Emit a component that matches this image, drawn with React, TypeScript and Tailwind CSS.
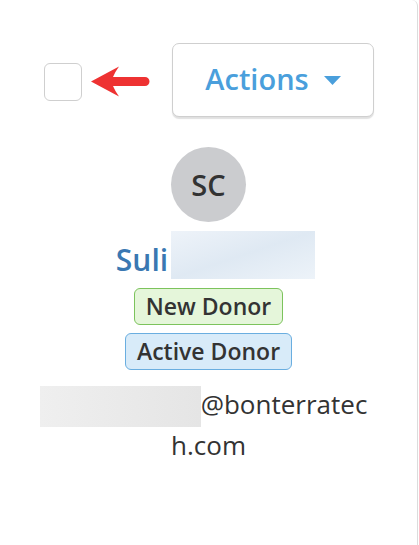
import React from 'react'

const font = { fontFamily: '"Open Sans", "Noto Sans", Arial, sans-serif' }

function PointerArrow() {
  return (
    <svg width="60" height="33" viewBox="0 0 60 33" className="block">
      <path
        d="M1 16.5 L29 1.5 Q25 7 23 12 L55 12 A4.5 4.5 0 0 1 55 21 L23 21 Q25 26 29 31.5 Z"
        fill="#ee3232"
      />
    </svg>
  )
}

export default function App() {
  return (
    <div className="w-[419px] h-[545px] bg-white overflow-hidden" style={font}>
      <div className="w-[418px] h-[545px] border-r border-[#dcdcdc] rounded-tr-md flex flex-col items-center">
        {/* top row */}
        <div className="w-full flex items-center pl-[44px] pt-[43px]">
          <div className="mt-[3px] w-[38px] h-[38px] rounded-[6px] border border-[#cfcfcf] bg-white" />
          <div className="ml-[8px] mt-[2px]">
            <PointerArrow />
          </div>
          <button className="ml-[22px] w-[202px] h-[74px] rounded-[7px] border border-[#cfcfcf] bg-white shadow-[0_2px_1px_rgba(0,0,0,0.12)] flex items-center justify-center gap-[15px] text-[#4a9fdc] text-[29px] font-semibold">
            <span className="-mt-[2px]">Actions</span>
            <svg width="17" height="9" viewBox="0 0 17 9" className="mt-[1px]">
              <path d="M0 0 L17 0 L8.5 9 Z" fill="#4a9fdc" />
            </svg>
          </button>
        </div>

        {/* avatar */}
        <div className="mt-[30px] w-[75px] h-[75px] rounded-full bg-[#cbcccf] flex items-center justify-center text-[#333] text-[29px] font-semibold">
          SC
        </div>

        {/* name */}
        <div className="mt-[9px] ml-[14px] flex items-end h-[48px]">
          <span className="text-[#3a78b2] text-[30px] font-semibold leading-none mb-[4px]">Suli</span>
          <span className="ml-[3px] inline-block w-[144px] h-[48px] bg-gradient-to-br from-[#eef3f9] via-[#dfe9f3] to-[#edf3f9]" />
        </div>

        {/* badges */}
        <div className="mt-[9px] px-[11px] h-[37px] rounded-[6px] border border-[#7cc35c] bg-[#e5f6da] text-[#333] text-[23px] font-semibold flex items-center">
          New Donor
        </div>
        <div className="mt-[8px] px-[11px] h-[37px] rounded-[6px] border border-[#6aaee0] bg-[#d8ebf9] text-[#333] text-[23px] font-semibold flex items-center">
          Active Donor
        </div>

        {/* email */}
        <div className="mt-[16px] w-[326px] text-center text-[#333] text-[26px] leading-[36px] break-all">
          <span className="-ml-[10px] inline-block align-top w-[161px] h-[41px] bg-gradient-to-r from-[#efefef] to-[#e5e5e5]" />
          @bonterratech.com
        </div>
      </div>
    </div>
  )
}
